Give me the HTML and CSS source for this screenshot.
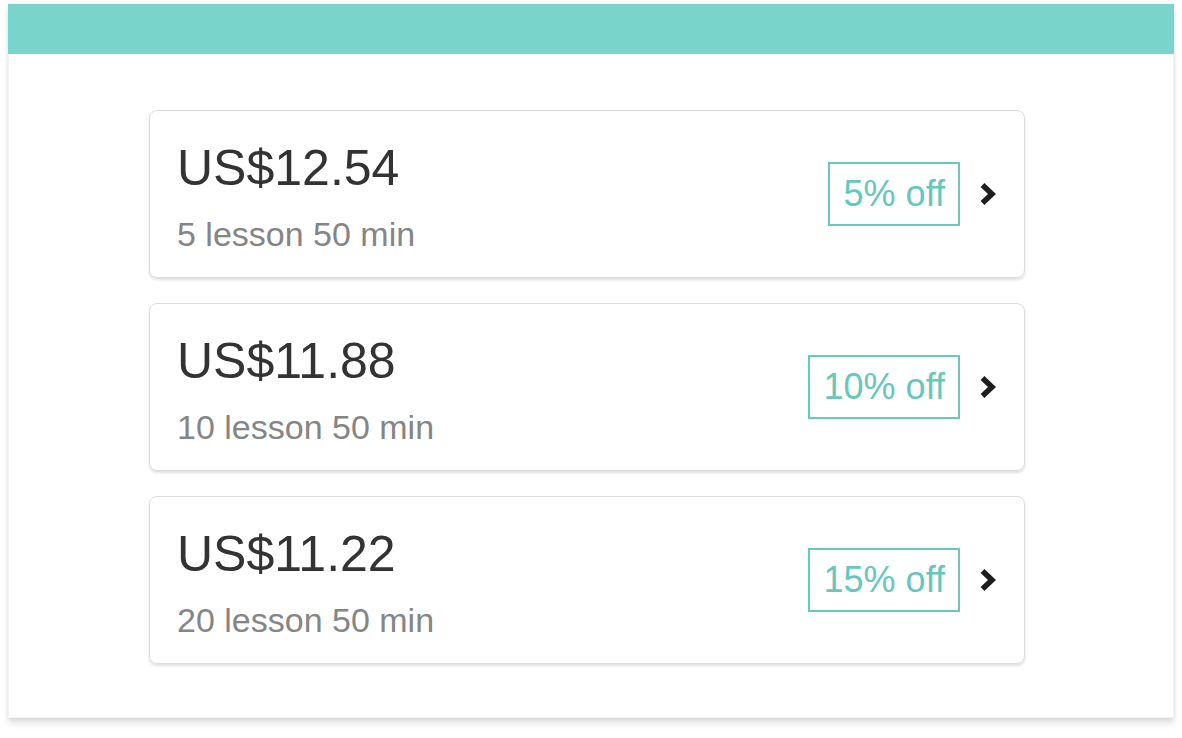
FILE: index.html
```html
<!DOCTYPE html>
<html>
<head>
<meta charset="utf-8">
<link rel="stylesheet" href="styles.css">
</head>
<body>
<div class="panel">
  <div class="topbar"></div>
  <div class="list">
    <div class="card">
      <div class="info">
        <div class="price">US$12.54</div>
        <div class="desc">5 lesson 50 min</div>
      </div>
      <div class="side">
        <span class="badge">5% off</span>
        <svg class="chev" width="18" height="26" viewBox="0 0 18 26"><polyline points="3.5,4 13,13 3.5,22" fill="none" stroke="#1e1e1e" stroke-width="5.5" stroke-linejoin="miter" stroke-linecap="butt"/></svg>
      </div>
    </div>
    <div class="card">
      <div class="info">
        <div class="price">US$11.88</div>
        <div class="desc">10 lesson 50 min</div>
      </div>
      <div class="side">
        <span class="badge">10% off</span>
        <svg class="chev" width="18" height="26" viewBox="0 0 18 26"><polyline points="3.5,4 13,13 3.5,22" fill="none" stroke="#1e1e1e" stroke-width="5.5" stroke-linejoin="miter" stroke-linecap="butt"/></svg>
      </div>
    </div>
    <div class="card">
      <div class="info">
        <div class="price">US$11.22</div>
        <div class="desc">20 lesson 50 min</div>
      </div>
      <div class="side">
        <span class="badge">15% off</span>
        <svg class="chev" width="18" height="26" viewBox="0 0 18 26"><polyline points="3.5,4 13,13 3.5,22" fill="none" stroke="#1e1e1e" stroke-width="5.5" stroke-linejoin="miter" stroke-linecap="butt"/></svg>
      </div>
    </div>
  </div>
</div>
</body>
</html>
```

FILE: styles.css
```css
html, body {
  background: #ffffff;
}
body {
  margin: 0;
  padding: 4px 8px 20px 8px;
  font-family: "Liberation Sans", Arial, Helvetica, sans-serif;
}
.panel {
  background: #ffffff;
  height: 714px;
  border: 1px solid #f2f2f2;
  border-top: none;
  box-shadow: 0 6px 6px rgba(0, 0, 0, 0.10), 0 1px 3px rgba(0, 0, 0, 0.08);
  box-sizing: border-box;
}
.topbar {
  height: 50px;
  margin: 0 -1px;
  background: #79d5cc;
}
.list {
  padding: 56px 0 0 140px;
  display: flex;
  flex-direction: column;
  gap: 25px;
}
.card {
  width: 876px;
  height: 168px;
  box-sizing: border-box;
  border: 1px solid #dcdcdc;
  border-radius: 8px;
  box-shadow: 0 2px 3px rgba(0, 0, 0, 0.13);
  display: flex;
  align-items: center;
  justify-content: space-between;
  padding: 0 27px 0 27px;
}
.info {
  display: flex;
  flex-direction: column;
  padding-top: 5px;
}
.price {
  font-size: 50px;
  line-height: 56px;
  color: #333333;
}
.desc {
  font-size: 34px;
  line-height: 40px;
  color: #858585;
  margin-top: 18px;
}
.side {
  display: flex;
  align-items: center;
  gap: 19px;
}
.badge {
  display: block;
  height: 64px;
  box-sizing: border-box;
  border: 2px solid #67c9be;
  color: #66c7bc;
  font-size: 36px;
  line-height: 60px;
  padding: 0 13px 0 14px;
}
.chev {
  display: block;
}
```
